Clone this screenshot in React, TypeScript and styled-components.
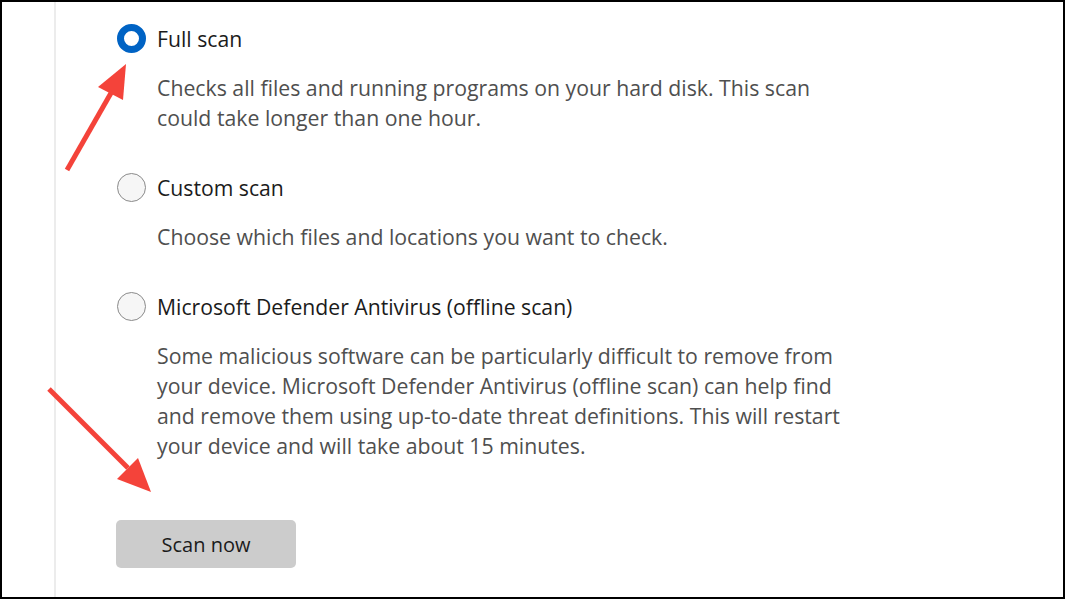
import React from "react";
import styled, { createGlobalStyle } from "styled-components";

const GlobalStyle = createGlobalStyle`
  html, body {
    margin: 0;
    padding: 0;
    background: #ffffff;
  }
  body {
    font-family: "Open Sans", "Noto Sans", sans-serif;
  }
`;

const Frame = styled.div`
  position: relative;
  box-sizing: border-box;
  width: 1065px;
  height: 599px;
  border: 2px solid #000;
  background: #fff;
  display: flex;
  overflow: hidden;
`;

const Gutter = styled.div`
  width: 52px;
  flex-shrink: 0;
  border-right: 2px solid #ececec;
`;

const Content = styled.main`
  flex: 1;
  padding: 21px 0 0 60px;
  display: flex;
  flex-direction: column;
`;

const Option = styled.div`
  display: flex;
  flex-direction: column;
  gap: 20px;
  margin-bottom: 39px;
`;

const OptionRow = styled.label`
  display: flex;
  align-items: center;
  height: 30px;
  gap: 11px;
`;

const Radio = styled.span<{ $checked?: boolean }>`
  box-sizing: border-box;
  width: 29px;
  height: 29px;
  border-radius: 50%;
  flex-shrink: 0;
  margin-left: 1px;
  background: ${(p) => (p.$checked ? "#fff" : "#f6f6f6")};
  border: ${(p) => (p.$checked ? "7px solid #0063c4" : "1.5px solid #8a8a8a")};
`;

const Title = styled.span`
  font-size: 21.2px;
  color: #1b1b1b;
  white-space: nowrap;
`;

const Description = styled.div`
  padding-left: 41px;
  font-size: 21.25px;
  line-height: 30px;
  color: #4f4f4f;
`;

const Line = styled.span`
  display: block;
  white-space: nowrap;
`;

const ScanButton = styled.button`
  margin-top: 20px;
  width: 180px;
  height: 48px;
  border: none;
  border-radius: 5px;
  background: #cccccc;
  color: #1b1b1b;
  font-family: "Open Sans", "Noto Sans", sans-serif;
  font-size: 20px;
  cursor: pointer;
`;

const Annotations = styled.svg`
  position: absolute;
  top: -2px;
  left: -2px;
  width: 1065px;
  height: 599px;
  pointer-events: none;
`;

const options = [
  {
    title: "Full scan",
    checked: true,
    lines: [
      "Checks all files and running programs on your hard disk. This scan",
      "could take longer than one hour.",
    ],
  },
  {
    title: "Custom scan",
    lines: ["Choose which files and locations you want to check."],
  },
  {
    title: "Microsoft Defender Antivirus (offline scan)",
    lines: [
      "Some malicious software can be particularly difficult to remove from",
      "your device. Microsoft Defender Antivirus (offline scan) can help find",
      "and remove them using up-to-date threat definitions. This will restart",
      "your device and will take about 15 minutes.",
    ],
  },
];

const arrowRed = "#f4433a";

const App: React.FC = () => {
  return (
    <>
      <GlobalStyle />
      <Frame>
        <Gutter />
        <Content>
          {options.map((o) => (
            <Option key={o.title}>
              <OptionRow>
                <Radio $checked={o.checked} />
                <Title>{o.title}</Title>
              </OptionRow>
              <Description>
                {o.lines.map((l) => (
                  <Line key={l}>{l}</Line>
                ))}
              </Description>
            </Option>
          ))}
          <ScanButton>Scan now</ScanButton>
        </Content>
        <Annotations viewBox="0 0 1065 599">
          <line x1="67" y1="170" x2="111" y2="93" stroke={arrowRed} strokeWidth="5" />
          <polygon points="126,64 98,87 123,100" fill={arrowRed} />
          <line x1="49" y1="389" x2="128" y2="468" stroke={arrowRed} strokeWidth="5" />
          <polygon points="151,492 117,479 138,458" fill={arrowRed} />
        </Annotations>
      </Frame>
    </>
  );
};

export default App;
